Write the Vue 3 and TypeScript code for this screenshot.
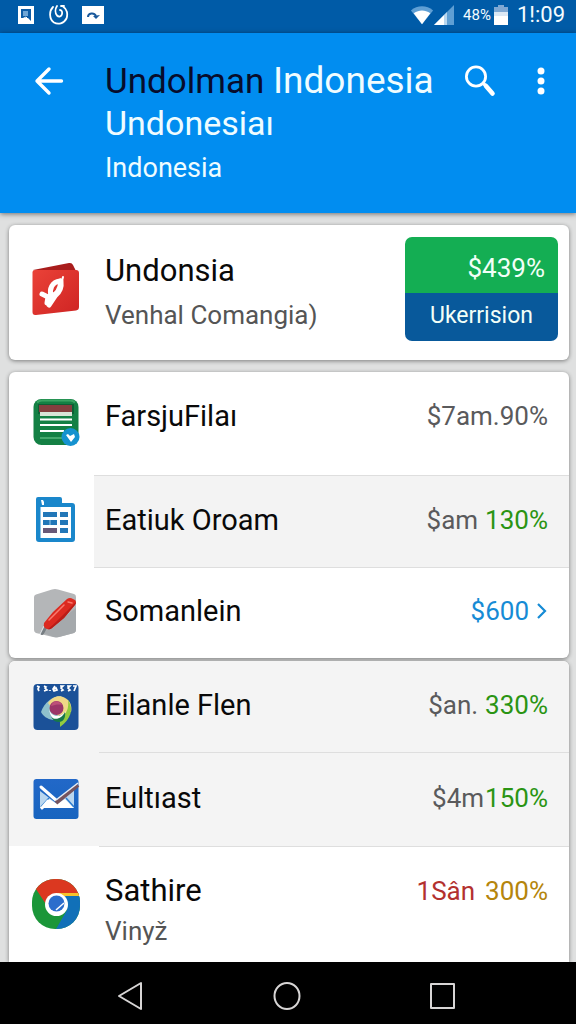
<script setup lang="ts">
type IconName = 'ledger' | 'table' | 'pen' | 'album' | 'mail' | 'browser'
type Tone = 'plain' | 'green' | 'blue' | 'red' | 'amber'

interface Part {
  text: string
  tone: Tone
}

interface Row {
  icon: IconName
  title: string
  subtitle?: string
  amount: Part[]
  link?: boolean
  variant: string
}

interface Group {
  name: string
  rows: Row[]
}

const groups: Group[] = [
  {
    name: 'upper',
    rows: [
      { icon: 'ledger', title: 'FarsjuFilaı', amount: [{ text: '$7am.90%', tone: 'plain' }], variant: 'tall' },
      {
        icon: 'table',
        title: 'Eatiuk Oroam',
        amount: [{ text: '$am', tone: 'plain' }, { text: '130%', tone: 'green' }],
        variant: 'shaded-body',
      },
      { icon: 'pen', title: 'Somanlein', amount: [{ text: '$600', tone: 'blue' }], link: true, variant: 'regular' },
    ],
  },
  {
    name: 'lower',
    rows: [
      {
        icon: 'album',
        title: 'Eilanle Flen',
        amount: [{ text: '$an.', tone: 'plain' }, { text: '330%', tone: 'green' }],
        variant: 'shaded',
      },
      {
        icon: 'mail',
        title: 'Eultıast',
        amount: [{ text: '$4m', tone: 'plain' }, { text: '150%', tone: 'green' }],
        variant: 'shaded tight',
      },
      {
        icon: 'browser',
        title: 'Sathire',
        subtitle: 'Vinyž',
        amount: [{ text: '1Sân', tone: 'red' }, { text: '300%', tone: 'amber' }],
        variant: 'double',
      },
    ],
  },
]
</script>

<template>
  <div class="screen">
    <div class="status">
      <div class="status-side">
        <svg class="notice" viewBox="0 0 20 20" aria-hidden="true">
          <path fill="#fff" d="M2 1h16v18H2z" />
          <path fill="#0d5ca6" d="M5 4h10v12l-3-3H5z" />
          <path fill="#6fa6d6" d="M7 6h5v5H7z" />
          <path fill="none" stroke="#fff" d="m6 14 4-2 3 3" />
        </svg>
        <svg class="notice" viewBox="0 0 20 20" aria-hidden="true">
          <g fill="none" stroke="#fff" stroke-width="1.800" stroke-linecap="round">
            <path d="M4 2C0 6 0 14 5 17.500c4 2.500 10 1 12.500-4C19 9 18 4 14.500 2" />
            <path d="M8 1C6 4 6 8 8 10.500c2 2 4.500 1 5-1.500s-.500-4-2-4" />
            <path d="M12 1h3" />
          </g>
        </svg>
        <svg class="notice wide" viewBox="0 0 22 20" aria-hidden="true">
          <path fill="#fff" d="M0 1h22v18H0z" />
          <path fill="none" stroke="#18589b" stroke-width="2" d="M6 12c0-4 6-5 8-1" />
          <path fill="#18589b" d="m11 11 7-1-4 4z" />
        </svg>
      </div>
      <div class="status-side right">
        <svg class="wifi" viewBox="0 0 26 20" aria-hidden="true">
          <path fill="#5f9fd4" d="M1 5C8-1 18-1 25 5L13 20z" />
          <path fill="#fff" d="M4 8c6-4 12-4 18 0l-9 12z" />
        </svg>
        <svg class="signal" viewBox="0 0 20 20" aria-hidden="true">
          <path fill="#5f9fd4" d="M20 0v20H0z" />
          <path fill="#fff" d="M10 10v10H0z" />
          <path fill="#b9d7ef" d="m10 10 3-3v13h-3z" />
        </svg>
        <span class="percent">48%</span>
        <svg class="battery" viewBox="0 0 14 20" aria-hidden="true">
          <path fill="#7fa8d3" d="M4 0h6v2h4v9H0V2h4z" />
          <path fill="#dbe8f5" d="M0 7h14v5H0z" />
          <path fill="#fff" d="M0 11h14v9H0z" />
        </svg>
        <span class="clock">1!:09</span>
      </div>
    </div>

    <header class="bar">
      <button class="tool back" type="button" aria-label="Back">
        <svg viewBox="0 0 30 30" aria-hidden="true">
          <path fill="none" stroke="#fff" stroke-width="3.400" stroke-linecap="round" stroke-linejoin="round" d="M27.500 15H3M15 3 3 15l12 12" />
        </svg>
      </button>
      <div class="heading">
        <h1><span class="dark">Undolman</span> <span class="light">Indonesia</span></h1>
        <p class="second">Undonesiaı</p>
        <p class="third">Indonesia</p>
      </div>
      <button class="tool search" type="button" aria-label="Search">
        <svg viewBox="0 0 32 32" aria-hidden="true">
          <circle cx="12" cy="11.500" r="9.600" fill="none" stroke="#fff" stroke-width="2.800" />
          <path fill="none" stroke="#fff" stroke-width="3.200" d="m19 18 3 3" />
          <path fill="none" stroke="#fff" stroke-width="4.600" stroke-linecap="round" d="m22 21 6.500 7.500" />
        </svg>
      </button>
      <button class="tool more" type="button" aria-label="More options">
        <svg viewBox="0 0 8 28" aria-hidden="true">
          <g fill="#fff">
            <circle cx="4" cy="4" r="3.500" />
            <circle cx="4" cy="14" r="3.500" />
            <circle cx="4" cy="24" r="3.500" />
          </g>
        </svg>
      </button>
    </header>

    <main class="content">
      <section class="card lead">
        <svg class="icon" viewBox="0 0 48 54" aria-hidden="true">
          <defs>
            <linearGradient id="wallet" x1="0" y1="0" x2="1" y2="1">
              <stop offset="0" stop-color="#ea4238" />
              <stop offset="1" stop-color="#cf2423" />
            </linearGradient>
          </defs>
          <path fill="#a91d1c" d="M1 8 37 1q3-.500 4 2l3 6-20 3z" />
          <path fill="url(#wallet)" d="M3 8h41q3 0 3 3v34q0 3-3 3.500L4 53q-3.500.500-3.500-3V10q0-2 2.500-2z" />
          <path fill="none" stroke="#fff" stroke-width="5" stroke-linecap="round" stroke-linejoin="round" d="M28 19c-8 1-11 8-9 15 6-1 9-7 10-15 1 7-1 11-6 15l-6 9M10 32l6 3-1 6" />
          <path stroke="#fff" stroke-width="2" stroke-linecap="round" d="m30 19 1-4" />
        </svg>
        <div class="body">
          <div class="names">
            <h2 class="big">Undonsia</h2>
            <p>Venhal Comangia)</p>
          </div>
          <div class="badge">
            <span class="gain">$439%</span>
            <button class="action" type="button">Ukerrision</button>
          </div>
        </div>
      </section>

      <ul v-for="group in groups" :key="group.name" class="card list" :class="group.name">
        <li v-for="row in group.rows" :key="row.title" class="row" :class="row.variant">
          <svg v-if="row.icon === 'ledger'" class="icon" viewBox="0 0 48 48" aria-hidden="true">
            <rect x="1.500" y="1" width="45" height="46" rx="8" fill="#148044" />
            <path fill="none" stroke="#3aa563" stroke-width="2" d="M5 4.500q2-2 5-2h28q3 0 5 2" />
            <path fill="#0c6034" d="M6 6h36v10H6z" />
            <path fill="#843f3f" d="M7 7h33v7H7z" />
            <path fill="#d9e5d7" d="M8 14h32v4H8z" />
            <path stroke="#fff" stroke-width="2.200" d="M8 21.500h32M8 27h32M8 33h24" />
            <path stroke="#45a86d" stroke-width="2" d="M8 40h24" />
            <circle cx="38.500" cy="39" r="9" fill="#1592cf" />
            <path fill="#fff" d="m34 37 2-1 2 2 2-1 2-1 1 3-4 5z" />
          </svg>
          <svg v-else-if="row.icon === 'table'" class="icon" viewBox="0 0 48 48" aria-hidden="true">
            <path fill="#1a87cb" d="M6 2h22q2 0 2 2v4h10q3 0 3 3v33q0 3-3 3H7q-3 0-3-3V4q0-2 2-2z" />
            <path fill="#fff" d="M8.500 12H39v31H8.500zM9 5h2l1 2v3h-2z" />
            <path fill="#2277b8" d="M11 17h14v5H11zM28 17h8v5h-8zM11 25h14v5H11zM28 25h8v5h-8zM28 33h8v5h-8z" />
            <path fill="#695978" d="M11 33h14v5H11z" />
            <path stroke="#9ccbe8" d="M18 25v5" />
          </svg>
          <svg v-else-if="row.icon === 'pen'" class="icon" viewBox="0 0 48 50" aria-hidden="true">
            <path fill="#b4b6b8" d="M2 9q0-2 2-2.500L20 1.500q3-.800 6 0L42 6q2 .600 2 3v33q0 2-2 3l-15 4q-3 .800-6 0L4 45q-2-1-2-3z" />
            <path fill="#a5a9ac" d="M20 38 44 20v22q0 2-2 3l-15 4q-4 1-8-1l-8-3z" />
            <path stroke="#777e83" stroke-width="4" stroke-linecap="round" d="m14 38-4 7" />
            <path stroke="#dce0e3" stroke-width="1.200" d="m12 38-4 8" />
            <path fill="#dc2a20" d="m12 35 9-11L35 11q3-2 6 0l2 1q2 2 0 5L32 30 20 40q-2 2-5 1l-2-1q-2-2-1-5z" />
            <path fill="#b91d17" d="m44 14q0 2-2 4L32 30 20 40q-2 2-4 1 4-3 12-11z" />
            <path stroke="#f9796d" stroke-width="1.500" stroke-linecap="round" d="m17 32 15-15M36 14l4 1" />
          </svg>
          <svg v-else-if="row.icon === 'album'" class="icon" viewBox="0 0 48 48" aria-hidden="true">
            <rect x="1.500" y="1" width="45" height="46" rx="4" fill="#1b5198" />
            <path fill="none" stroke="#fff" stroke-width="1.700" d="m5 3 2 1-1 2 1 2M12 3l2 1-1 1 2 2-3 1M18 7v1M23 3l-2 3 1 2 3-1-1-2-2 1M28 3h3l-2 2 2 2-2 1M35 3h3l-2 2 2 2-2 1M41 3h3l-2 5" />
            <path fill="#8fc1cc" d="M9 29c3-9 11-16 20-16 5 6 2 19-8 24-6-1-10-4-12-8z" />
            <path fill="#f0d887" d="M16 20c5-8 14-9 20-3 3 3 4 8 3 12l-13 4z" />
            <path fill="#93cb3f" d="M36 17c6 9 3 19-8 27v-9c7-4 9-10 8-18z" />
            <path fill="#fff" d="M17 26c2 8 11 10 17 2l-5 10c-6 1-11-4-12-12z" />
            <path fill="#16784b" d="M19 34c5 4 11 1 14-5 1 6-2 10-6 10-4 0-6-2-8-5z" />
            <circle cx="24.500" cy="25" r="7" fill="#9b3668" />
            <path fill="#bd5079" d="M19 23c2-6 8-6 11-1-4-1-7 0-11 1z" />
          </svg>
          <svg v-else-if="row.icon === 'mail'" class="icon" viewBox="0 0 48 42" aria-hidden="true">
            <defs>
              <linearGradient id="sky" x1="0" y1="0" x2="0" y2="1">
                <stop offset="0" stop-color="#2268c8" />
                <stop offset="1" stop-color="#1764bf" />
              </linearGradient>
            </defs>
            <rect x="1.500" y="1" width="45" height="40" rx="3" fill="url(#sky)" />
            <path fill="#b9d6ef" d="m8 13 16 12 18-13v18H8z" />
            <path fill="#fff" d="m8 30 9-9 8 5 8-5 9 9z" />
            <path fill="none" stroke="#2c7dd1" stroke-width="1.500" d="m17 20-8 9M34 20l8 9" />
            <path stroke="#fff" stroke-width="3" stroke-linecap="round" d="m9 9 16 14M10 30l6-7" />
            <path stroke="#75545f" stroke-width="4" d="M24 25 46 7" />
            <path stroke="#e5edf7" stroke-width="1.500" d="M24 22 46 5" />
          </svg>
          <svg v-else class="icon" viewBox="0 0 48 50" aria-hidden="true">
            <defs>
              <clipPath id="disc"><rect x="0" y="0" width="48" height="50" rx="23" /></clipPath>
            </defs>
            <g clip-path="url(#disc)">
              <path fill="#1b9639" d="M0 0h48v50H0z" />
              <path fill="#db3820" d="M2 7 6 0h42v16H25l-8 14z" />
              <path fill="#1170b8" d="M25 16h23v34H24l11-19z" />
              <path fill="#f5c32c" d="M25 14h23v3H29z" />
            </g>
            <circle cx="24.500" cy="25.500" r="11.500" fill="#fff" />
            <circle cx="24.500" cy="24.500" r="8" fill="#2c6dcc" />
            <path fill="none" stroke="#fff" stroke-width="1.500" d="m24 31 8-7" />
          </svg>

          <div class="body">
            <div class="names">
              <h2 :class="{ big: row.subtitle }">{{ row.title }}</h2>
              <p v-if="row.subtitle">{{ row.subtitle }}</p>
            </div>
            <component :is="row.link ? 'a' : 'div'" class="amount" :href="row.link ? '#details' : undefined">
              <span v-for="part in row.amount" :key="part.text" :class="part.tone">{{ part.text }}</span>
              <svg v-if="row.link" class="chevron" viewBox="0 0 12 18" aria-hidden="true">
                <path fill="none" stroke="#168bd5" stroke-width="2.200" d="m2 2 7 7-7 7" />
              </svg>
            </component>
          </div>
        </li>
      </ul>
    </main>

    <nav class="keys" aria-label="System">
      <button type="button" aria-label="Back">
        <svg viewBox="0 0 30 32" aria-hidden="true"><path d="M26 3v26L4 16z" /></svg>
      </button>
      <button type="button" aria-label="Home">
        <svg viewBox="0 0 30 32" aria-hidden="true"><ellipse cx="16" cy="16" rx="12.500" ry="13" /></svg>
      </button>
      <button type="button" aria-label="Recent apps">
        <svg viewBox="0 0 30 32" aria-hidden="true"><path d="M4 4h23v24H4z" /></svg>
      </button>
    </nav>
  </div>
</template>

<style>
body {
  margin: 0;
}
</style>

<style scoped>
.screen {
  display: flex;
  flex-direction: column;
  height: 100vh;
  overflow: hidden;
  background: #dfe0e0;
  font-family: Roboto, "Liberation Sans", sans-serif;
  color: #090909;
}

h1,
h2,
p,
ul {
  margin: 0;
  padding: 0;
  font-weight: 400;
}

button {
  padding: 0;
  border: 0;
  background: none;
  font: inherit;
  color: inherit;
}

svg {
  display: block;
  flex: none;
}

.status {
  flex: none;
  display: flex;
  align-items: center;
  justify-content: space-between;
  height: 33px;
  padding: 0 11px 4px 16px;
  box-sizing: border-box;
  background: #005ba7;
  color: #f4fbff;
}

.status-side {
  display: flex;
  align-items: center;
  gap: 13px;
}

.status-side.right {
  gap: 0;
}

.notice {
  width: 20px;
  height: 20px;
}

.notice.wide {
  width: 22px;
}

.wifi {
  width: 24px;
  height: 20px;
}

.signal {
  width: 20px;
  height: 20px;
}

.percent {
  margin: 0 3px 0 9px;
  font-size: 15px;
}

.battery {
  width: 14px;
  height: 20px;
}

.clock {
  margin-left: 9px;
  font-size: 22px;
  line-height: 28px;
}

.bar {
  flex: none;
  position: relative;
  z-index: 1;
  display: flex;
  align-items: flex-start;
  padding: 24px 11px 20px 25px;
  background: #018df0;
  box-shadow: 0 1px 5px rgba(0, 0, 0, 0.5);
  color: #effcff;
}

.tool {
  display: grid;
  place-items: center;
  flex: none;
  height: 48px;
}

.back {
  width: 48px;
  margin-right: 32px;
}

.back svg {
  width: 30px;
  height: 30px;
}

.search {
  width: 48px;
  margin-right: 13px;
}

.search svg {
  width: 32px;
  height: 32px;
}

.more {
  width: 48px;
}

.more svg {
  width: 8px;
  height: 28px;
}

.heading {
  flex: 1;
  min-width: 0;
  padding-top: 2px;
  white-space: nowrap;
}

.heading h1 {
  font-size: 35px;
  line-height: 43px;
}

.dark {
  color: #070c2c;
}

.light {
  font-size: 37px;
}

.second {
  font-size: 34px;
  line-height: 41px;
}

.third {
  font-size: 27px;
  line-height: 49px;
}

.content {
  flex: 1;
  min-height: 0;
  display: flex;
  flex-direction: column;
  overflow: hidden;
  padding: 12px 7px 0 9px;
}

.card {
  flex: none;
  border-radius: 6px;
  background: #fff;
  box-shadow: 0 1px 4px rgba(0, 0, 0, 0.45);
}

.lead,
.row {
  display: flex;
  align-items: center;
  padding-left: 23px;
}

.icon {
  width: 48px;
}

.lead {
  margin-bottom: 12px;
  padding-top: 12px;
  padding-bottom: 19px;
}

.body {
  flex: 1;
  display: flex;
  align-items: center;
  justify-content: space-between;
  min-width: 0;
  margin-left: 14px;
  padding: 0 21px 4px 11px;
  white-space: nowrap;
}

.lead .body {
  padding-right: 11px;
  padding-bottom: 0;
}

h2 {
  font-size: 29px;
  line-height: 36px;
}

h2.big {
  font-size: 31px;
}

.names p {
  margin-top: 4px;
  font-size: 26px;
  line-height: 36px;
  color: #555;
}

.lead .names {
  padding-top: 8px;
}

.lead .names p {
  margin-top: 8px;
}

.badge {
  display: flex;
  flex-direction: column;
  width: 153px;
  border-radius: 7px;
  overflow: hidden;
  color: #f2fff8;
}

.gain {
  padding: 6px 13px 0 0;
  background: #14ae53;
  font-size: 26px;
  line-height: 50px;
  text-align: right;
}

.action {
  height: 48px;
  padding-bottom: 4px;
  background: #08599b;
  font-size: 23px;
}

.list {
  list-style: none;
  overflow: hidden;
}

.upper {
  margin-bottom: 3px;
}

.lower {
  flex: 1 0 auto;
  border-radius: 6px 6px 0 0;
}

.row .body {
  align-self: stretch;
  min-height: 91px;
  box-sizing: border-box;
}

.row + .row .body {
  border-top: 1px solid #dedede;
}

.row.tall .body {
  min-height: 103px;
  padding-bottom: 16px;
}

.row.tall .icon,
.row.shaded-body .icon {
  margin-bottom: 4px;
}

.row.shaded-body .body {
  min-height: 92px;
  background: #f3f3f3;
}

.row.shaded {
  background: #f4f4f4;
}

.row.tight .body {
  min-height: 94px;
}

.lower .row .body {
  margin-left: 19px;
  padding-left: 6px;
}

.row.double .body {
  align-items: flex-start;
  min-height: 116px;
  padding-top: 26px;
}

.amount {
  display: flex;
  align-items: center;
  gap: 7px;
  font-size: 26px;
  line-height: 36px;
  text-decoration: none;
}

.tight .amount {
  gap: 1px;
}

.double .amount {
  gap: 10px;
}

.plain {
  color: #5a5a5c;
}

.green {
  color: #2a9413;
}

.blue {
  color: #168bd5;
}

.red {
  color: #b3312f;
}

.amber {
  color: #b5850c;
}

.chevron {
  width: 12px;
  height: 18px;
}

.keys {
  flex: none;
  display: flex;
  justify-content: space-between;
  padding: 0 105px 0 101px;
  background: #000;
}

.keys button {
  display: grid;
  place-items: center;
  width: 58px;
  height: 62px;
  padding-top: 5px;
}

.keys svg {
  width: 30px;
  height: 32px;
  fill: none;
  stroke: #d7d5d5;
  stroke-width: 2;
  stroke-linejoin: round;
}
</style>
